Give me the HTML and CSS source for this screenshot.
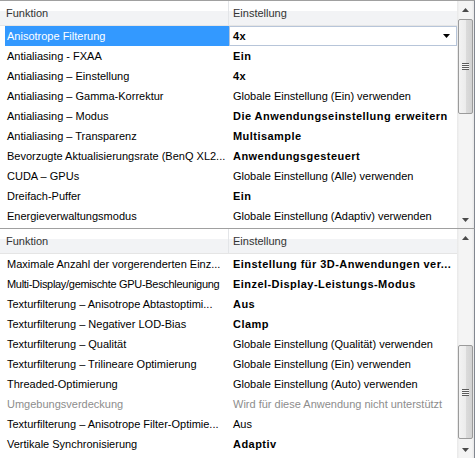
FILE: index.html
```html
<!DOCTYPE html>
<html lang="de">
<head>
<meta charset="utf-8">
<title>Einstellungen</title>
<link rel="stylesheet" href="styles.css">
</head>
<body>
<div class="panel panel-top">
  <div class="list">
    <div class="header"><div class="hcell c1">Funktion</div><div class="hcell c2">Einstellung</div></div>
    <div class="row selected"><div class="c1">Anisotrope Filterung</div><div class="c2 combo"><span class="b">4x</span><svg class="caret" width="8" height="5" viewBox="0 0 8 5"><path d="M0 0H7L3.5 4Z" fill="#000"/></svg></div></div>
    <div class="row"><div class="c1">Antialiasing - FXAA</div><div class="c2 b">Ein</div></div>
    <div class="row"><div class="c1">Antialiasing – Einstellung</div><div class="c2 b">4x</div></div>
    <div class="row"><div class="c1">Antialiasing – Gamma-Korrektur</div><div class="c2">Globale Einstellung (Ein) verwenden</div></div>
    <div class="row"><div class="c1">Antialiasing – Modus</div><div class="c2 b">Die Anwendungseinstellung erweitern</div></div>
    <div class="row"><div class="c1">Antialiasing – Transparenz</div><div class="c2 b">Multisample</div></div>
    <div class="row"><div class="c1">Bevorzugte Aktualisierungsrate (BenQ XL2...</div><div class="c2 b">Anwendungsgesteuert</div></div>
    <div class="row"><div class="c1">CUDA – GPUs</div><div class="c2">Globale Einstellung (Alle) verwenden</div></div>
    <div class="row"><div class="c1">Dreifach-Puffer</div><div class="c2 b">Ein</div></div>
    <div class="row"><div class="c1">Energieverwaltungsmodus</div><div class="c2">Globale Einstellung (Adaptiv) verwenden</div></div>
  </div>
  <div class="scrollbar">
    <div class="sb-btn"><svg width="7" height="4" viewBox="0 0 7 4"><path d="M3.5 0L7 4H0Z" fill="#4a4a4a"/></svg></div>
    <div class="sb-track">
      <div class="thumb thumb-top"><span class="grip"></span></div>
    </div>
    <div class="sb-btn"><svg width="7" height="4" viewBox="0 0 7 4"><path d="M0 0H7L3.5 4Z" fill="#4a4a4a"/></svg></div>
  </div>
</div>
<div class="panel panel-bottom">
  <div class="list">
    <div class="header"><div class="hcell c1">Funktion</div><div class="hcell c2">Einstellung</div></div>
    <div class="row"><div class="c1">Maximale Anzahl der vorgerenderten Einz...</div><div class="c2 b">Einstellung für 3D-Anwendungen ver...</div></div>
    <div class="row"><div class="c1 tight">Multi-Display/gemischte GPU-Beschleunigung</div><div class="c2 b">Einzel-Display-Leistungs-Modus</div></div>
    <div class="row"><div class="c1">Texturfilterung – Anisotrope Abtastoptimi...</div><div class="c2 b">Aus</div></div>
    <div class="row"><div class="c1">Texturfilterung – Negativer LOD-Bias</div><div class="c2 b">Clamp</div></div>
    <div class="row"><div class="c1">Texturfilterung – Qualität</div><div class="c2">Globale Einstellung (Qualität) verwenden</div></div>
    <div class="row"><div class="c1">Texturfilterung – Trilineare Optimierung</div><div class="c2">Globale Einstellung (Ein) verwenden</div></div>
    <div class="row"><div class="c1">Threaded-Optimierung</div><div class="c2">Globale Einstellung (Auto) verwenden</div></div>
    <div class="row disabled"><div class="c1">Umgebungsverdeckung</div><div class="c2">Wird für diese Anwendung nicht unterstützt</div></div>
    <div class="row"><div class="c1">Texturfilterung – Anisotrope Filter-Optimie...</div><div class="c2">Aus</div></div>
    <div class="row"><div class="c1">Vertikale Synchronisierung</div><div class="c2 b">Adaptiv</div></div>
  </div>
  <div class="scrollbar">
    <div class="sb-btn"><svg width="7" height="4" viewBox="0 0 7 4"><path d="M3.5 0L7 4H0Z" fill="#4a4a4a"/></svg></div>
    <div class="sb-track">
      <div class="thumb thumb-bottom"><span class="grip"></span></div>
    </div>
    <div class="sb-btn"><svg width="7" height="4" viewBox="0 0 7 4"><path d="M0 0H7L3.5 4Z" fill="#4a4a4a"/></svg></div>
  </div>
</div>
</body>
</html>
```
FILE: styles.css
```css
html, body {
  margin: 0;
  padding: 0;
  background: #fff;
}
body {
  font-family: "Liberation Sans", Arial, sans-serif;
  font-size: 11px;
  color: #000;
  width: 475px;
  overflow: hidden;
}
.panel {
  display: flex;
  border-top: 1px solid #a0a0a0;
  border-right: 1px solid #828790;
  box-sizing: border-box;
  width: 475px;
}
.panel-top { height: 228px; }
.panel-bottom { height: 230px; }
.list {
  flex: 1;
  min-width: 0;
  overflow: hidden;
}
.header {
  display: grid;
  grid-template-columns: 229px 1fr;
  height: 24px;
  line-height: 24px;
  border-bottom: 1px solid #e5e5e5;
  background: linear-gradient(#ffffff 0, #ffffff 40%, #f2f3f5 40%, #f2f3f5 100%);
  color: #333;
}
.hcell { white-space: nowrap; overflow: hidden; }
.hcell.c1 {
  padding-left: 6px;
  border-right: 1px solid #e3e5e8;
}
.hcell.c2 { padding-left: 4px; }
.row {
  display: grid;
  grid-template-columns: 229px 1fr;
  height: 20px;
  line-height: 20px;
}
.row .c1 {
  margin-left: 5px;
  padding-left: 2px;
  white-space: nowrap;
  overflow: hidden;
}
.row .c1.tight { letter-spacing: -0.3px; }
.row .c2 {
  padding-left: 4px;
  white-space: nowrap;
  overflow: hidden;
}
.b {
  font-weight: bold;
  letter-spacing: 0.45px;
}
.row.selected .c1 {
  background: #3399ff;
  color: #fff;
}
.row.disabled { color: #8d8d8d; }
.row .combo {
  display: flex;
  align-items: center;
  justify-content: space-between;
  border: 1px solid #b7c5d9;
  padding-left: 3px;
  padding-right: 5px;
  box-sizing: border-box;
  height: 20px;
  line-height: 18px;
}
.caret { display: block; }
.scrollbar {
  width: 17px;
  flex: none;
  display: flex;
  flex-direction: column;
  background: linear-gradient(to right, #e8e8e8 0, #f4f4f4 15%, #f4f4f4 85%, #e8e8e8 100%);
}
.sb-btn {
  height: 17px;
  flex: none;
  display: flex;
  align-items: center;
  justify-content: center;
}
.sb-track {
  flex: 1;
  position: relative;
}
.thumb {
  margin: 0 1px;
  box-sizing: border-box;
  border: 1px solid #9b9b9b;
  border-radius: 2px;
  background: linear-gradient(to right, #f3f3f3 0, #ececec 50%, #dcdcdc 51%, #d2d2d2 100%);
  display: flex;
  align-items: center;
  justify-content: center;
}
.thumb-top {
  margin-top: 1px;
  height: 95px;
}
.thumb-bottom {
  margin-top: 99px;
  height: 94px;
}
.grip {
  width: 7px;
  height: 7px;
  background: repeating-linear-gradient(#5c5c5c 0, #5c5c5c 1px, #f6f6f6 1px, #f6f6f6 2px);
}
```
